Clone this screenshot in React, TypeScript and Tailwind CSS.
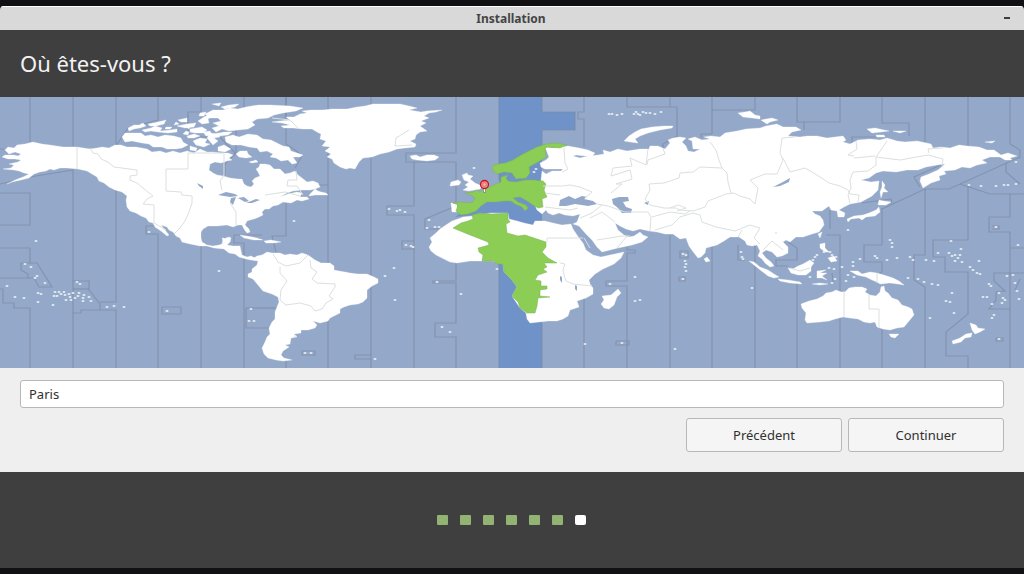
import { useState } from 'react';

const OCEAN = '#94a9ca';
const ACTIVE = '#6f93c8';
const GREEN = '#8ccd56';

// Land outlines, one polygon per entry
const LAND = [
    // North and Central America
    '5,150 8,147 14,148 17,145 25,144 33,142 42,144 50,145 63,147 77,147 90,149 97,148 102,147 109,148 115,145 121,145 127,147 136,147 147,149 152,152 160,151 166,153 173,151 180,153 187,151 194,153 200,149 207,152 213,152 220,153 228,153 233,155 229,158 232,160 227,161 221,163 215,162 210,164 209,170 213,173 217,175 223,176 230,178 238,179 242,179 244,184 247,186 251,187 254,184 252,181 255,178 260,176 258,172 256,169 259,167 260,164 265,164 270,165 274,169 280,169 283,172 285,174 290,173 295,171 298,175 302,178 307,182 313,181 318,183 320,187 315,189 310,190 302,190 293,191 287,193 280,197 288,194 297,192 302,193 300,197 307,197 309,199 302,201 297,200 291,203 283,202 278,205 273,206 269,209 265,209 262,212 263,215 259,217 254,219 250,220 247,221 245,225 249,229 250,232 247,233 244,229 242,225 238,225 233,227 227,225 217,226 208,226 203,229 201,232 201,238 202,242 207,245 213,246 219,245 222,244 223,239 229,237 231,238 230,242 227,245 233,246 240,246 241,251 242,255 247,257 251,256 255,258 258,261 251,260 246,259 239,257 235,254 229,253 224,249 214,248 207,246 200,246 190,244 182,242 180,238 176,236 173,232 169,230 167,227 161,225 165,230 169,235 167,236 161,231 155,227 153,223 149,222 146,218 141,216 136,213 130,211 127,207 126,200 127,196 122,192 115,190 109,187 104,183 99,181 97,177 92,174 87,171 78,169 67,168 60,168 54,170 50,169 46,171 40,172 34,174 29,178 21,180 12,182 7,184 15,180 23,177 29,174 24,173 19,171 14,170 3,169 11,168 14,165 9,164 18,162 21,160 15,159 8,159 2,157 5,155 14,155 18,156 21,154 15,152 9,154',
    '310,194 315,189 318,191 321,192 326,193 328,195 322,195 315,195 309,196',
    '125,189 131,192 130,194 124,191',
    '96,174 101,176 104,181 99,179',
    '90,170 95,172 98,175 93,174',
    // Canadian Arctic
    '122,137 125,133 132,133 141,133 145,136 151,135 158,137 165,135 174,136 181,138 183,142 188,145 182,148 176,149 167,149 162,147 153,147 149,144 142,143 137,142 132,141 125,142',
    '128,128 134,125 139,125 143,123 146,126 140,128 134,129 129,131',
    '142,130 151,128 155,126 162,128 160,131 170,130 177,129 177,132 168,133 158,132 151,131 145,132',
    '148,124 158,122 166,120 164,124 156,126 150,126', '178,120 187,118 187,122 181,122', '177,126 187,124 196,123 194,127 185,128',
    '190,129 202,127 207,130 203,133 195,133 190,132', '198,121 204,117 208,115 213,116 208,119 209,123 202,124',
    '193,141 200,138 207,139 205,143 210,144 204,147 196,145', '187,136 194,134 200,136 194,138 188,138',
    '205,114 213,110 223,110 230,108 238,109 246,107 258,105 270,105 290,106 303,108 296,111 283,113 274,115 268,118 257,119 252,122 255,125 248,129 238,130 229,131 222,129 216,132 212,128 219,126 213,123 221,121 218,118 210,118',
    '221,107 229,105 239,104 235,107 225,109', '186,131 189,132 188,135 183,134', '176,122 179,124 174,125', '190,146 197,148 196,151 190,150', '203,132 210,131 212,135 206,136',
    '212,104 221,103 219,106', '166,127 172,127 170,129 165,129', '186,127 190,126 189,129', '214,134 224,132 232,132 228,135 219,136', '200,113 206,112 204,116 199,116',
    '225,137 233,135 239,137 248,134 257,135 263,139 271,140 277,143 283,146 289,147 291,151 303,155 300,157 293,157 297,163 292,164 288,160 281,161 276,158 270,157 273,154 267,151 260,152 257,148 249,147 241,145 232,145 226,142',
    '210,133 218,134 220,137 214,138 218,141 213,145 207,138', '240,151 247,151 248,154 252,157 246,158 239,157 236,154', '218,147 224,145 231,149 225,152 218,151', '249,162 256,160 258,162 252,163',
    // Greenland
    '272,122 280,121 290,120 286,117 294,117 300,114 307,113 302,111 311,110 323,110 332,109 347,109 357,107 365,106 373,104 387,104 400,104 409,106 417,108 409,110 421,112 427,111 442,110 436,112 429,113 424,116 429,118 421,121 426,123 420,126 427,131 420,132 416,135 415,139 410,141 416,144 415,147 405,148 397,149 389,152 380,154 372,157 363,158 359,162 355,169 350,168 346,169 340,167 334,163 332,159 327,157 331,154 325,151 330,147 322,146 326,141 320,139 321,134 317,132 312,129 303,129 293,128 284,128 281,126 290,125 282,123',
    '410,156 416,155 420,157 427,155 434,155 439,157 435,160 427,161 417,160 412,159',
    // South America
    '254,258 257,256 262,255 267,252 272,253 280,253 285,255 290,254 297,255 302,253 308,255 315,260 321,263 330,263 334,266 334,270 339,271 345,272 350,273 358,274 367,274 374,277 378,279 378,283 372,286 367,290 367,298 363,302 358,304 350,305 344,307 340,309 340,313 334,316 330,318 328,321 320,323 313,321 317,325 315,328 308,330 301,330 301,333 294,334 297,337 291,338 290,344 285,345 289,347 283,351 281,355 284,358 292,360 283,361 276,360 268,358 264,354 262,348 265,342 267,337 270,334 269,328 272,322 275,319 275,312 277,307 279,302 278,297 272,294 263,291 258,285 253,279 248,277 248,274 252,272 252,269 257,265 258,261',
    // Africa
    '430,238 436,233 440,229 446,225 452,221 458,219 463,217 473,216 490,213 508,213 509,219 517,221 524,223 533,225 535,221 545,221 553,223 562,225 571,224 573,229 579,238 583,243 586,250 593,255 601,257 610,255 624,252 621,258 614,264 603,269 595,274 589,280 590,284 593,288 593,294 586,298 577,301 579,307 570,310 568,316 563,319 557,321 548,321 539,322 530,323 527,319 526,313 520,308 512,296 517,287 512,280 504,272 503,264 492,261 482,261 470,261 457,263 450,262 442,258 436,255 431,251 429,247 432,242',
    '618,289 621,293 617,297 614,305 609,309 604,308 601,304 604,300 602,296 611,295',
    // Europe and Asia
    '542,171 546,174 552,171 561,171 563,169 556,169 545,169 541,167 540,163 546,160 549,157 547,152 545,147 552,148 560,147 568,146 579,148 588,150 595,153 592,156 585,156 576,155 573,156 580,158 588,156 598,155 604,154 603,150 610,152 618,149 627,151 640,149 649,149 650,146 658,146 665,149 670,143 668,140 673,138 680,137 686,138 682,142 686,146 688,151 694,152 700,149 693,149 692,141 688,139 695,137 702,140 710,139 704,137 711,136 720,137 725,133 737,131 746,129 760,128 766,126 777,124 783,127 796,127 801,130 792,132 788,136 800,137 807,136 817,136 827,138 843,136 846,140 843,142 850,144 858,140 870,139 880,140 887,138 897,141 905,142 917,141 931,144 933,148 941,147 950,148 959,145 967,146 979,147 987,150 994,150 1001,155 1008,153 1017,156 1010,158 1012,160 1005,160 1000,157 990,157 982,160 987,163 977,165 970,168 962,167 955,170 944,171 946,174 939,176 940,180 931,183 923,188 920,181 921,177 929,174 938,170 945,164 937,165 926,167 918,170 907,170 896,172 883,171 876,173 869,178 861,180 871,182 879,181 878,190 872,196 861,202 850,204 844,207 839,210 845,213 844,217 838,217 837,211 831,210 829,206 822,211 812,211 815,214 820,216 823,220 824,225 819,232 812,234 803,237 796,237 790,242 786,240 783,242 788,247 788,253 782,256 777,257 772,252 766,250 762,253 766,258 771,262 774,266 770,267 765,263 762,259 758,256 760,251 757,245 752,246 747,245 745,241 739,237 730,237 724,241 717,245 706,248 705,253 701,257 698,258 694,253 689,246 686,238 680,239 673,234 665,234 657,232 649,231 640,229 633,231 626,229 620,226 615,223 618,230 624,235 629,237 634,236 640,232 643,235 648,237 642,242 632,245 618,248 602,252 597,247 592,240 586,234 579,226 573,224 577,222 580,214 573,216 565,215 559,213 553,215 548,213 546,210 542,214 537,210 534,203 541,195 541,180',
    '451,203 457,204 457,212 452,212', '462,175 467,173 468,175 473,176 470,179 475,183 482,186 480,189 469,191 463,190 468,187 465,185 469,182 464,180', '451,182 458,180 461,182 459,185 450,186',
    '624,141 629,136 635,132 641,129 652,127 664,126 673,126 672,128 660,130 648,133 640,136 635,139 638,143 630,142',
    '738,113 745,112 750,111 755,115 760,116 760,119 752,118 743,117', '761,120 772,118 778,120 770,122 767,124',
    '867,129 875,128 884,130 889,131 881,132 872,133', '893,131 906,131 900,133', '985,142 995,141 992,143', '876,135 884,135 885,137 877,137',
    '882,181 885,185 884,188 888,192 883,192 881,198 880,192 882,187', '879,200 884,201 891,202 886,205 878,205', '879,207 880,212 875,216 866,217 862,220 859,218 851,219 848,222 847,219 854,216 863,215 869,213 876,210', '818,234 822,232 820,238',
    // Islands of the south seas
    '749,261 754,262 760,267 768,270 774,274 779,277 774,278 768,276 759,269', '778,279 788,280 800,282 802,284 790,283 780,281', '788,268 793,269 798,266 803,264 810,260 814,263 811,267 811,271 806,275 798,275 791,273',
    '817,271 826,270 820,273 827,273 822,276 827,280 822,278 817,278', '820,244 825,243 825,248 829,252 825,252 820,248', '828,258 834,256 837,261 831,262', '707,257 710,261 706,262 704,259', '812,284 820,283 828,284 820,285',
    '850,271 858,271 862,274 870,272 877,273 887,276 893,278 899,281 904,285 898,284 890,283 880,284 877,282 872,280 866,277 857,275',
    '801,304 809,301 817,299 823,296 826,293 832,292 836,290 841,292 845,292 849,288 855,287 862,287 867,289 865,292 870,295 876,296 880,292 881,287 884,286 885,291 888,293 892,298 898,300 902,305 908,307 912,309 914,315 909,321 904,327 897,328 890,330 883,329 877,327 875,322 870,323 864,322 858,319 850,318 843,317 835,319 829,321 820,322 807,323 805,320 806,313 802,308',
    '889,334 899,334 895,338 891,337', '970,323 976,325 978,328 985,329 980,332 975,334 972,330', '972,333 971,337 965,338 961,342 953,344 952,341 960,338 966,334',
    '240,235 247,236 257,238 263,240 254,240 244,238', '264,241 271,240 281,242 274,243 266,243', '222,238 224,238 223,240',
];

const GREEN_LAND = [
    '453,203 460,202 467,203 473,202 475,198 471,195 465,193 474,192 476,190 480,192 483,190 490,187 496,184 501,182 501,177 508,175 506,178 508,181 516,182 525,180 534,180 543,181 546,184 544,190 547,197 542,199 543,207 538,208 533,205 527,201 520,197 513,198 518,202 526,205 528,208 525,211 522,207 515,204 511,201 504,201 496,202 487,202 481,206 476,211 468,214 461,215 456,211 458,205',
    '492,166 498,164 505,163 513,160 521,155 529,151 537,147 546,144 556,143 567,145 560,148 548,147 545,148 546,157 538,162 529,167 530,173 526,178 516,179 512,173 504,172 497,174 493,171',
    '453,228 461,223 468,221 473,219 472,215 480,213 492,214 508,213 508,219 510,222 506,224 507,233 518,236 525,235 546,242 546,247 542,252 548,258 557,263 544,263 547,267 543,269 547,272 538,275 535,280 541,281 541,286 547,286 547,289 540,290 540,296 550,297 538,298 537,306 535,313 527,313 520,308 518,302 512,296 517,287 512,280 504,272 503,264 497,264 493,261 482,261 483,255 479,252 478,248 489,245 488,242 470,235',
];

// Water that lies inside or cuts into the continents
const LAKES = [
    '560,200 569,196 575,199 582,196 587,197 584,199 593,201 597,204 588,206 575,204 566,206 559,206', '612,199 619,197 628,197 629,201 623,202 626,207 632,209 631,213 622,213 618,208 613,204',
    '773,187 781,183 790,178 789,182 780,186', '218,195 226,192 235,194 238,196 230,197', '231,198 236,197 233,205 230,202', '238,198 244,197 249,201 245,202', '246,203 256,199 260,200 252,203', '197,183 203,186 203,189 199,186',
    '644,203 649,201 648,205', '560,276 562,277 562,283 560,280', '575,285 577,286 577,291 575,289',
];

const BORDERS = [
    '77,147 77,169', '90,148 93,153 98,154 101,159 108,162 114,167 137,170 137,175 130,176 130,180 137,183 143,188 148,192 153,196 147,199 143,204 154,205 154,223 166,230',
    '166,169 188,169 188,153 224,153', '166,169 166,191 181,192 182,195 192,196 192,203 189,212 185,221 180,228 174,234', '224,154 224,175 220,181 222,190', '230,203 236,212 236,225', '296,171 297,180 288,180 287,186 297,186 303,195', '265,195 285,192 300,196',
    '273,254 278,262 286,266 300,263 308,255', '280,267 280,273 287,281 281,290 280,300 286,305 300,303 311,306 315,311 322,309 326,303 333,299 329,296 335,287 335,284 317,283 312,279 317,272 311,268 310,260',
    '547,242 547,238 583,238', '560,263 565,264 563,270 564,275 566,281 573,284 592,286', '584,238 590,248',
    '564,148 565,163 568,169 562,172', '543,186 562,186 570,185 580,187 592,192 585,198', '648,149 646,165 630,158 632,166 613,168 611,176 630,170 632,179 616,184 622,184 611,193',
    '663,148 665,154 648,160 647,165', '597,204 608,206 625,212 648,212 651,217 650,231', '645,199 650,205 664,208 676,208 680,210 693,211 705,207 708,201 726,194 734,193 740,196 750,199 755,204 758,188 750,180 765,174 777,174 783,160 780,153 782,138 795,137',
    '645,199 650,190 649,184 664,183 679,178 680,173 693,172 700,167 722,168 719,160 716,150 710,142', '722,168 727,173 728,182 731,193', '652,217 670,212 685,214 690,211', '655,230 672,225 680,217 693,213 700,215 702,222 716,227 735,231 750,225 760,228 754,238 760,244',
    '783,158 790,172 805,168 817,175 829,183 840,186 848,190 850,194 859,195 858,202', '850,203 848,195 851,188 850,180 853,172 868,171 876,165 876,157 887,141', '876,157 900,160 928,155 943,159 942,166', '854,156 848,155 857,149 856,141', '875,156 854,158', '929,153 928,149 943,148',
    '580,218 592,213 602,205', '590,218 602,212 615,222', '597,240 622,236 630,236', '617,248 627,236',
    '844,291 844,317', '869,295 869,309 879,309 879,328', '877,273 877,283', '790,268 800,271 810,268', '763,250 772,241 783,250',
    '409,130 396,138 395,146 412,145', '272,118 290,120 298,128', '738,237 742,230', '670,208 678,205 686,208 677,211', '545,193 560,195', '545,207 570,210 578,208',
];

const ZONES = [
    '30,97 30,142', '73,97 73,146', '116,97 116,146 128,128 158,120 158,97', '201,97 201,112 188,112 188,137 220,137 236,154', '244,97 244,110', '236,108 236,153 225,164 225,175', '286,97 286,144 295,150 302,156 295,168', '328,97 328,368', '371,97 371,368', '456,97 456,153 406,153 406,162 456,162 456,205', '414,162 414,206 387,206 387,215 414,215 414,368',
    '0,149 4,149', '0,184 30,177 73,170 73,368', '0,193 30,193 30,225 0,225', '0,248 30,248 30,263 21,263 21,270 28,274 28,278 0,278', '30,263 37,263 52,287 39,287 34,278 28,278', '0,289 3,289 3,303 14,303 14,308 30,308 30,368', '73,281 89,281 89,290 100,304 100,310 81,310 81,313 73,313', '73,289 89,289', '100,302 116,302 116,170', '100,310 116,310 116,368',
    '158,368 158,234 146,234 146,226 155,226', '201,368 201,246', '244,368 244,243 234,243 234,235 262,235', '286,97 286,118', '286,196 286,236 272,236 276,252', '162,307 181,307 181,314 162,314 162,307', '246,308 277,308', '246,308 246,328 270,328', '286,361 286,368', '302,351 315,351 315,355 302,355 302,351', '371,359 355,359 355,355 371,355',
    '414,241 402,241 402,249 414,249', '456,206 425,219 425,229 440,229', '456,263 456,281 433,281 433,283 456,283 456,323 435,323 435,337 456,337 456,368', '499,97 499,180', '499,263 499,368', '542,97 542,112 575,112 575,130 542,130 542,145', '542,323 542,368', '584,97 584,112 578,112 578,119 584,119 584,147', '584,297 584,368', '316,185 328,185',
    '627,97 627,107 677,107 677,136 663,144 663,148', '670,97 670,107', '627,247 627,250 635,250 635,253 627,253 627,281 606,281 606,286 627,286 627,368', '616,341 629,341 629,345 616,345 616,341', '712,97 712,134', '712,110 755,110 755,97', '701,138 701,134 712,134', '797,97 797,122 840,122 840,97', '804,122 804,130',
    '670,235 670,368', '712,246 712,368', '680,251 688,251 688,258 680,258 680,251', '679,277 685,277 685,281 679,281 679,277', '738,245 738,260 745,260', '755,245 755,368', '788,242 797,248 797,260 776,260 776,266 788,266', '797,283 797,368', '830,229 830,210', '826,235 840,235 840,291', '840,317 840,368', '832,273 833,282',
    '882,97 882,123 909,123 909,136', '852,143 852,137 875,137', '925,97 925,142', '968,97 968,146', '1010,97 1010,144 1020,150 1020,157 949,189 925,189 882,209 882,245 864,245 864,262 882,262 882,272 877,275', '920,187 914,177 943,164', '862,203 891,199 892,203', '882,329 882,368', '925,189 925,255 914,255 914,280 925,287 925,368', '968,186 968,240 933,240 933,257 945,257 945,272 968,272 968,314 946,332 946,356 968,356 968,368', '960,184 990,194 1024,194', '1006,163 1006,172 1020,184', '1010,194 1010,217 989,217 989,232 1010,232 1010,368', '992,226 999,226 999,229 992,229', '1024,248 1010,248', '1024,273 994,273 994,281 1005,291 996,292 996,300 989,309 1010,309', '1020,279 1015,290', '996,338 1003,338 1003,341 996,341 996,338',
];

// Small islands, x and y pairs
const DOTS = [
    [36, 241], [25, 264], [31, 267], [37, 276], [35, 278], [45, 283], [7, 286], [15, 297], [24, 298], [38, 293], [41, 294], [38, 302], [54, 296], [57, 296], [53, 305], [55, 292], [59, 292], [61, 294], [64, 292], [65, 295], [69, 294], [70, 297], [73, 293], [75, 298], [79, 293], [78, 296], [84, 295], [83, 301], [83, 298], [89, 297], [91, 301], [66, 300], [71, 300], [77, 282], [80, 284], [107, 307], [114, 306], [124, 307], [149, 232], [167, 311], [219, 271], [251, 309], [249, 321], [254, 321], [294, 221], [305, 353], [311, 353], [295, 336], [394, 268], [385, 276], [395, 300], [375, 359],
    [389, 209], [397, 211], [400, 210], [405, 212], [429, 220], [427, 228], [435, 227], [439, 227], [406, 245], [411, 246], [413, 247], [437, 282], [461, 294], [442, 327], [450, 332], [474, 168], [497, 269], [610, 284], [635, 277], [635, 301], [640, 300], [622, 343], [585, 344], [683, 254], [686, 255], [685, 261], [686, 264], [685, 267], [686, 271], [683, 279], [675, 349], [741, 252], [742, 257], [743, 259], [752, 288], [776, 233],
    [609, 114], [612, 114], [617, 115], [622, 114], [634, 114], [636, 112], [638, 114], [640, 115], [643, 112], [646, 113], [650, 113], [655, 114], [661, 112], [536, 169], [534, 172], [848, 230], [969, 185], [981, 186], [996, 186], [1004, 185], [1008, 185], [1016, 184], [996, 227], [1018, 245], [1016, 162], [890, 240], [892, 243], [892, 247], [860, 259], [875, 256], [877, 258], [887, 260], [897, 258], [910, 257], [913, 260], [926, 260], [934, 261], [938, 253], [951, 241], [949, 253], [952, 256], [955, 255], [958, 258], [960, 255], [955, 261], [962, 262], [961, 249], [979, 261], [853, 262], [853, 266], [842, 267], [834, 269], [829, 268], [848, 275], [854, 277], [970, 267], [973, 270], [977, 273], [980, 274], [908, 278], [918, 279], [924, 282], [932, 284], [938, 285], [952, 293], [946, 301], [950, 302], [954, 313], [930, 318], [989, 284], [991, 286], [983, 297], [987, 297], [992, 304], [1003, 298], [1005, 300], [1002, 303], [1007, 276], [1013, 275], [1015, 283], [1017, 291], [1019, 299], [994, 315], [992, 318], [999, 293], [999, 339], [824, 252], [830, 252], [832, 255], [836, 257], [817, 255], [815, 257], [813, 260], [810, 277], [822, 284], [832, 283], [835, 279], [846, 281],
];

function WorldMap() {
    return (
        <svg viewBox="0 97 1024 271" role="img" aria-label="Fuseaux horaires" className="block w-full h-auto">
            <rect x="0" y="97" width="1024" height="271" fill={OCEAN} />
            <path d="M499 97H542V112H575V130H542V368H499V213L455 217L480 200L499 190Z" fill={ACTIVE} />
            <g fill="none" stroke="#7b879f" strokeOpacity="0.65" strokeWidth="1.2">
                {ZONES.map((points) => <polyline key={points} points={points} />)}
            </g>
            <g fill="#fff" stroke="#fff" strokeOpacity="0.5" strokeWidth="0.6">
                {LAND.map((points) => <polygon key={points} points={points} />)}
            </g>
            <g fill={GREEN} stroke="#7cb354" strokeWidth="0.5">
                {GREEN_LAND.map((points) => <polygon key={points} points={points} />)}
            </g>
            <g fill={OCEAN}>
                {LAKES.map((points) => <polygon key={points} points={points} />)}
            </g>
            <g fill="none" stroke="#dbe0de" strokeLinejoin="round">
                {BORDERS.map((points) => <polyline key={points} points={points} />)}
            </g>
            <g fill="#e6ebf0">
                {DOTS.map(([x, y]) => <ellipse key={`${x}-${y}`} cx={x} cy={y} rx="1.5" ry="1" />)}
            </g>
            {/* selected city */}
            <rect x="483" y="188" width="3" height="5" fill="#8a9a86" />
            <rect x="484" y="188" width="1" height="4" fill="#fff" />
            <circle cx="484.5" cy="184.5" r="4" fill="#f08e8e" stroke="#c4141c" strokeWidth="1.3" />
            <circle cx="484.5" cy="184.5" r="1.8" fill="#f7b0ae" stroke="#df6668" strokeWidth="0.8" />
        </svg>
    );
}

const STEPS = [1, 2, 3, 4, 5, 6, 7];
const CURRENT_STEP = 7;

export default function App() {
    const [city, setCity] = useState('Paris');

    return (
        <div className="min-h-screen bg-[#111113] py-[6px] flex flex-col font-['Noto_Sans','Open_Sans',sans-serif]">
            <div className="flex-1 flex flex-col bg-[#3f3f3f] rounded-t overflow-hidden">
                <header className="h-6 shrink-0 bg-[#d9d9d9] border-t border-white grid grid-cols-[1fr_auto_1fr] items-center pl-3 pr-[14px]">
                    <span />
                    <span className="text-xs font-bold text-[#454545]">Installation</span>
                    <button type="button" aria-label="Réduire" className="justify-self-end h-4 w-4 flex items-center justify-end">
                        <span className="block w-[6px] h-[2px] mb-[2px] bg-[#3c3c3c]" />
                    </button>
                </header>

                <div className="px-5 py-[18px] text-[#f2f2f2]">
                    <h1 className="text-[22px] leading-[31px]">Où êtes-vous ?</h1>
                </div>

                <WorldMap />

                <form onSubmit={(e) => e.preventDefault()} className="bg-[#efefef] px-5 pt-3 pb-5 text-[13px] text-[#303030]">
                    <input
                        type="text"
                        aria-label="Ville"
                        value={city}
                        onChange={(e) => setCity(e.target.value)}
                        className="block w-full h-7 px-2 bg-white border border-[#b8b8b8] rounded-[3px] outline-none"
                    />
                    <div className="mt-[10px] flex justify-end gap-[6px]">
                        <button type="button" className="w-[156px] h-[34px] pt-px bg-[#f5f5f5] border border-[#b8b8b8] rounded-[3px]">Précédent</button>
                        <button type="submit" className="w-[156px] h-[34px] pt-px bg-[#f5f5f5] border border-[#b8b8b8] rounded-[3px]">Continuer</button>
                    </div>
                </form>

                <footer className="flex-1 py-10 pr-[2px] flex items-center justify-center gap-3">
                    {STEPS.map((step) => (
                        <span key={step} className={step === CURRENT_STEP ? 'w-[11px] h-[10px] rounded-[2px] bg-white' : 'w-[11px] h-[10px] rounded-[1px] bg-[#92b372]'} />
                    ))}
                </footer>
            </div>
        </div>
    );
}
